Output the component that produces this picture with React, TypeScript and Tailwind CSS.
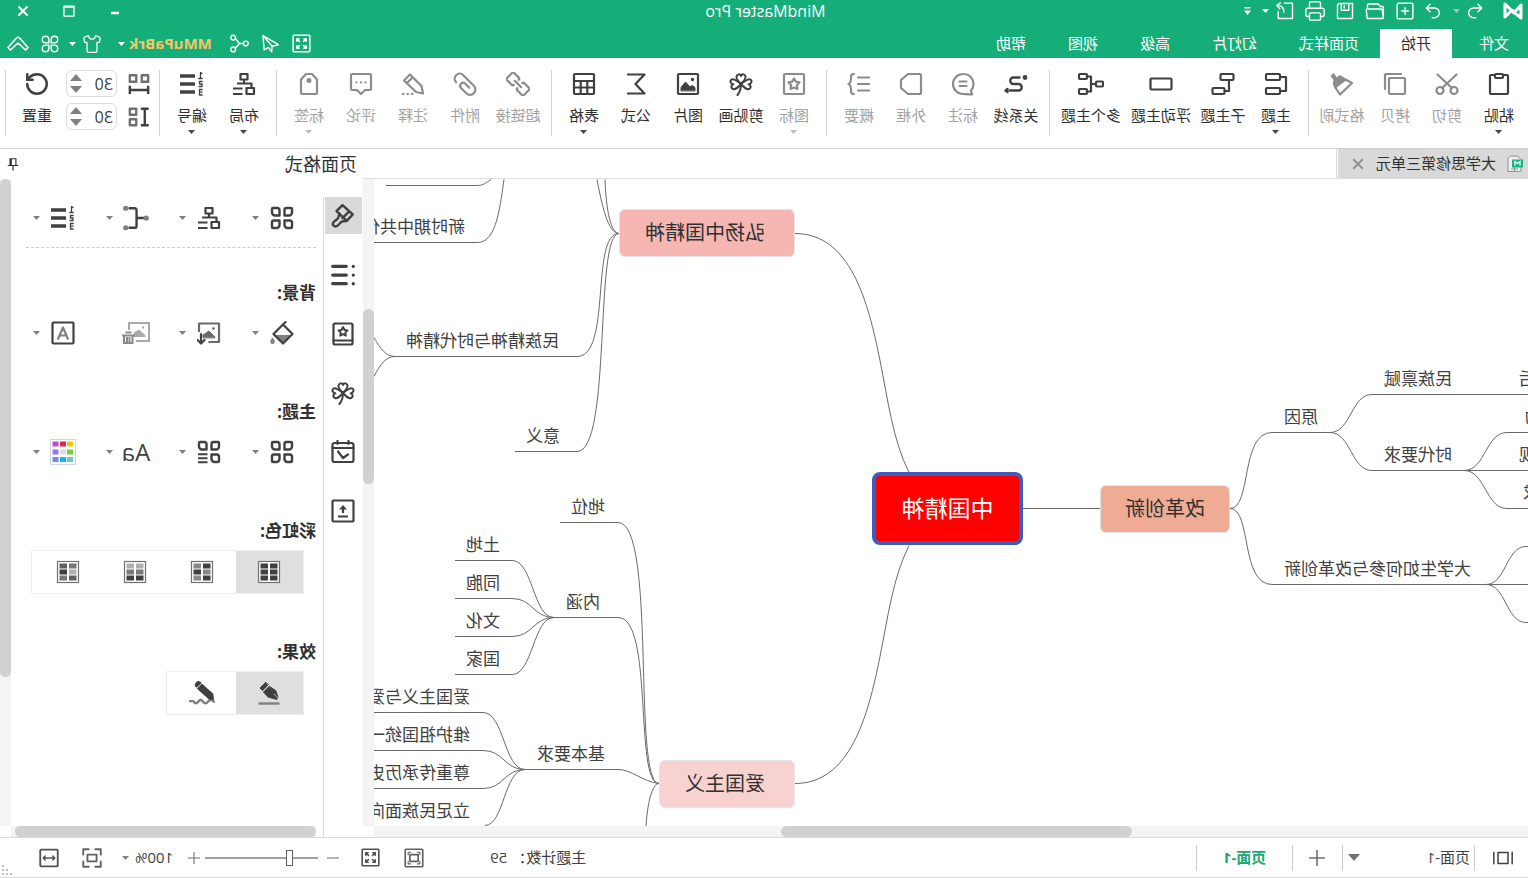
import React from "react";
import { Printer, RotateCw, Shirt } from "lucide-react";

type IconProps = { children: React.ReactNode; className?: string; sw?: number };

function Icon({ children, className = "size-6", sw = 2.2 }: IconProps) {
  return (
    <svg
      viewBox="0 0 24 24"
      className={`${className} shrink-0`}
      fill="none"
      stroke="currentColor"
      strokeWidth={sw}
      strokeLinecap="round"
      strokeLinejoin="round"
      aria-hidden="true"
    >
      {children}
    </svg>
  );
}

function Caret({ className = "text-[#45454f]" }: { className?: string }) {
  return (
    <svg viewBox="0 0 7 4" className={`h-1 w-[7px] shrink-0 ${className}`} aria-hidden="true">
      <path d="M0 0h7L3.5 4z" fill="currentColor" />
    </svg>
  );
}

/* ---------- icon drawings ---------- */

const paste = (
  <Icon>
    <path d="M8 3H4a1 1 0 0 0-1 1v17a1 1 0 0 0 1 1h16a1 1 0 0 0 1-1V4a1 1 0 0 0-1-1h-4" />
    <rect x="8" y="2" width="8" height="4" rx="1" />
  </Icon>
);
const cut = (
  <Icon>
    <circle cx="5" cy="18.5" r="3.5" />
    <circle cx="19" cy="18.5" r="3.5" />
    <path d="M2.5 2.5 16.8 16M21.5 2.5 7.2 16" />
  </Icon>
);
const copy = (
  <Icon>
    <rect x="2" y="6" width="16" height="16" rx="1" />
    <path d="M6 2h15a1 1 0 0 1 1 1v14" />
  </Icon>
);
const painter = (
  <Icon>
    <path d="M2 11 8.5 7.5 19 15 14 22.500z" />
    <path d="M8.500 7.500l5.500-3.500 3.500 2.500 3-4.500 2 2-3 4 1 3.500-1.500 4z" fill="currentColor" strokeWidth="1.600" />
  </Icon>
);
const topic = (
  <Icon>
    <rect x="8" y="2" width="14" height="6" rx="1" />
    <rect x="8" y="16" width="14" height="6" rx="1" />
    <path d="M8 5H2v14h6" />
  </Icon>
);
const subTopic = (
  <Icon>
    <rect x="1.5" y="2" width="13" height="6" rx="1" />
    <rect x="10.5" y="16" width="12" height="6" rx="1" />
    <path d="M6 9v10h4" />
  </Icon>
);
const floating = (
  <Icon>
    <rect x="1.5" y="6.5" width="21" height="11" rx="1" />
  </Icon>
);
const multi = (
  <Icon className="h-6 w-[26px]">
    <rect x="0" y="9.5" width="7" height="5" rx="1" />
    <rect x="16" y="2" width="8" height="5" rx="1" />
    <rect x="16" y="17" width="8" height="5" rx="1" />
    <path d="M16 4.500h-4v15h4M7 12h5" />
  </Icon>
);
const relation = (
  <Icon sw={2.4}>
    <circle cx="3" cy="5.5" r="1.2" fill="currentColor" />
    <path d="M8.500 5.500h6a3.200 3.200 0 0 1 0 6.500h-5a3.200 3.200 0 0 0 0 6.500H18" />
    <path d="M20.500 17 22.500 18.500 20.500 20z" fill="currentColor" />
  </Icon>
);
const callout = (
  <Icon>
    <path d="M12 2a10 10 0 0 1 0 20c-2 0-5 .5-9 .5l1-4A10 10 0 0 1 12 2z" />
    <path d="M8.500 9.500h7M8.500 14h7" />
  </Icon>
);
const boundary = (
  <Icon>
    <path d="M3.500 2H15l7 6v8l-7 6H3.500A1.500 1.500 0 0 1 2 20.500v-17A1.500 1.500 0 0 1 3.500 2z" />
  </Icon>
);
const summary = (
  <Icon>
    <path d="M2 5.500h11M2 12h11M2 18.500h11M17 2c3 0 3 1 3 4s0 5 2.500 6c-2.500 1-2.500 3-2.500 6s0 4-3 4" />
  </Icon>
);
const marks = (
  <Icon>
    <rect x="2" y="2" width="20" height="20" rx="1" />
    <path d="M12 6.500l1.800 3.200 3.700.7-2.600 2.700.5 3.900-3.400-1.500-3.400 1.500.5-3.900-2.600-2.700 3.700-.7z" />
  </Icon>
);
const clover = (
  <Icon sw={2}>
    <path d="M12 12C9 9 7 7 7.500 4.500 8 2 11 1.500 12 4c1-2.500 4-2 4.500.5C17 7 15 9 12 12z" />
    <path d="M12 12c-3 3.500-5.500 6-8 5-2.500-1-2-4 .3-4.700C1.800 12 .5 9 2.500 7.500 5 6 8 9 12 12z" />
    <path d="M12 12c3 3.500 5.500 6 8 5 2.500-1 2-4-.3-4.700C22.200 12 23.500 9 21.500 7.500 19 6 16 9 12 12z" />
    <path d="M12 12c0 4 1 8 3.500 11" />
  </Icon>
);
const picture = (
  <Icon>
    <rect x="2" y="2" width="20" height="20" rx="1" />
    <circle cx="7.500" cy="7.500" r="1" fill="currentColor" strokeWidth="1.500" />
    <path d="M5 18.500v-3l3-2 2 1.500 4.500-5 4.500 5.500v3z" fill="currentColor" strokeWidth="1" />
  </Icon>
);
const formula = (
  <Icon>
    <path d="M21 2.500H3.500l9 9.500-9 9.500H21" strokeLinecap="butt" />
  </Icon>
);
const tableIcon = (
  <Icon>
    <rect x="2" y="2" width="20" height="20" rx="1" />
    <path d="M2 9h20M2 15.500h20M8.700 9v13M15.300 9v13" />
  </Icon>
);
const linkIcon = (
  <Icon>
    <g transform="rotate(-45 12 12)">
      <path d="M9.500 15.500a1.500 1.500 0 0 1-1.500 1.500H1.500A1.500 1.500 0 0 1 0 15.500v-7A1.500 1.500 0 0 1 1.500 7H8a1.500 1.500 0 0 1 1.500 1.500" />
      <path d="M14.500 8.500A1.500 1.500 0 0 1 16 7h6.500A1.500 1.500 0 0 1 24 8.500v7a1.500 1.500 0 0 1-1.500 1.500H16a1.500 1.500 0 0 1-1.500-1.500" />
      <path d="M7.500 12h9" />
    </g>
  </Icon>
);
const clipIcon = (
  <Icon>
    <g transform="rotate(-45 12 12)">
      <path d="M19.500 17a5 5 0 0 0 0-10H4.500a5.300 5.300 0 0 0 0 10.600H12a3 3 0 0 0 0-6H6.500" />
    </g>
  </Icon>
);
const noteIcon = (
  <Icon>
    <path d="M2 21.500 3.500 14 15 2.500l6 6L9 20z M12.500 5.500l5.500 5.500" />
    <path d="M12.500 22h.6M17 22h.6M21.500 22h.6" />
  </Icon>
);
const comment = (
  <Icon>
    <path d="M3 2h18a1 1 0 0 1 1 1v14a1 1 0 0 1-1 1h-5l-4 4-4-4H3a1 1 0 0 1-1-1V3a1 1 0 0 1 1-1z" />
    <path d="M7.500 10.300v.1M12 10.300v.1M16.500 10.300v.1" />
  </Icon>
);
const tagIcon = (
  <Icon>
    <path d="M9 2h6l5 5.500V21a1 1 0 0 1-1 1H5a1 1 0 0 1-1-1V7.500z" />
    <circle cx="12" cy="8.500" r="1.400" fill="currentColor" />
  </Icon>
);
const layoutIcon = (
  <Icon>
    <rect x="8.500" y="2" width="7" height="5.500" />
    <rect x="2" y="16" width="7.500" height="6" />
    <path d="M12 8v3.500M4.500 15v-3.500H19M13.500 16.500h9.500M13.500 22h9.500" strokeLinecap="butt" />
  </Icon>
);
const numbering = (
  <Icon sw={1}>
    <path d="M9 4h15M9 12h15M9 20h15" strokeWidth="3.600" strokeLinecap="butt" />
    <path d="M2 1.500 3.500.5v6M1.800 6.500h3.400M1.800 9.500h2.700v2.500H2v2.500h3M1.800 17.500h2.700V23H1.800M2 20.200h2.500" strokeWidth="1.300" />
  </Icon>
);
const hSpace = (
  <Icon className="size-[22px]" sw={2.6}>
    <g opacity=".75">
      <rect x="2" y="2.500" width="7" height="7" />
      <rect x="15" y="2.500" width="7" height="7" />
    </g>
    <path d="M2 14v9M22 14v9M2 18.500h20" strokeLinecap="butt" />
  </Icon>
);
const vSpace = (
  <Icon className="size-[22px]" sw={2.6}>
    <g opacity=".75">
      <rect x="15" y="3" width="7" height="6.500" />
      <rect x="15" y="14.500" width="7" height="6.500" />
    </g>
    <path d="M1.500 3H10M1.500 21H10M5.700 3v18" strokeLinecap="butt" />
  </Icon>
);
const petals = (
  <Icon sw={2.4}>
    <path d="M3 2h4.500A2 2 0 0 1 9.500 4v5.500H5A3 3 0 0 1 2 6.500V3a1 1 0 0 1 1-1z" />
    <path d="M21 2h-4.500a2 2 0 0 0-2 2v5.500H19a3 3 0 0 0 3-3V3a1 1 0 0 0-1-1z" />
    <path d="M3 22h3.500a3 3 0 0 0 3-3v-4.500H4a2 2 0 0 0-2 2V21a1 1 0 0 0 1 1z" />
    <path d="M21 22h-3.500a3 3 0 0 1-3-3v-4.500H20a2 2 0 0 1 2 2V21a1 1 0 0 1-1 1z" />
  </Icon>
);
const petalsList = (
  <Icon sw={2.4}>
    <path d="M3 2h4.500A2 2 0 0 1 9.500 4v5.500H5A3 3 0 0 1 2 6.500V3a1 1 0 0 1 1-1z" />
    <path d="M21 2h-4.500a2 2 0 0 0-2 2v5.500H19a3 3 0 0 0 3-3V3a1 1 0 0 0-1-1z" />
    <path d="M3 22h3.500a3 3 0 0 0 3-3v-4.500H4a2 2 0 0 0-2 2V21a1 1 0 0 0 1 1z" />
    <path d="M13.500 14.300H23M13.500 18.300H23M13.500 22.300H23" strokeLinecap="butt" strokeWidth="2" />
  </Icon>
);
const connector = (
  <Icon className="size-[26px]">
    <path d="M4 12h7.500M18 3h-5a1.500 1.500 0 0 0-1.500 1.500v15A1.500 1.500 0 0 0 13 21h5" />
    <g fill="#808080" stroke="none">
      <circle cx="2.500" cy="12" r="2.400" />
      <circle cx="21.500" cy="3" r="2.400" />
      <circle cx="21.500" cy="21" r="2.400" />
    </g>
  </Icon>
);
const bucket = (
  <Icon>
    <path d="M3 14h16l-8 7.500z" fill="#808080" stroke="none" />
    <path d="M1.500 13 11 3.500l9.500 9.500-9.500 9.500z M11 3.500 8.500 1" />
    <path d="M21.500 16.500c1.500 2 2.300 3 2.300 4.300a2.300 2.300 0 0 1-4.600 0c0-1.300.8-2.300 2.300-4.300z" fill="#808080" stroke="none" />
  </Icon>
);
const imageDown = (
  <Icon>
    <g stroke="#6b6b6b">
      <path d="M12.500 21H2V2.500h20V11" strokeLinecap="butt" />
      <circle cx="7.500" cy="7.500" r=".6" fill="#6b6b6b" strokeWidth="1.500" />
      <path d="M6 16.500v-.5l6-6 6 4v2.500z" fill="#6b6b6b" strokeWidth="1" />
    </g>
    <path d="M20 13v9M16.500 19l3.500 3.500 3.500-3.500" />
  </Icon>
);
const imageTrash = (
  <svg viewBox="0 0 28 28" className="size-7 shrink-0" fill="none" strokeWidth="2" aria-hidden="true">
    <g stroke="#aaaaaa">
      <path d="M14 22H1V4h20v7" />
      <path d="M5 17.500v-1l6-5.500 5 3v3.500z" fill="#aaaaaa" strokeWidth="1" />
      <path d="M6 8.500h2" />
    </g>
    <g stroke="#8a8a8a">
      <path d="M15 16.500h13M18.500 13.500h6M17.500 16.500v7.500h8.500v-7.500M20.500 18v5M23 18v5" />
    </g>
  </svg>
);
const fontBox = (
  <Icon>
    <rect x="1.500" y="1.500" width="21" height="21" rx="1" />
    <path d="M6.800 18.500 12 6.500l5.200 12M8.500 14.500h7" stroke="#808080" strokeLinecap="butt" />
  </Icon>
);
const palette = (
  <svg viewBox="0 0 26 26" className="size-[26px] shrink-0" aria-hidden="true">
    <rect x=".5" y=".5" width="25" height="25" fill="#fff" stroke="#cdd6e6" />
    <path d="M3 2.500h6v5H3z" fill="#f0c808" />
    <path d="M10 2.500h6v5h-6z" fill="#dc2848" />
    <path d="M17.500 2.500h6v5h-6z" fill="#c04cc8" />
    <path d="M3 10.500h6v5H3z" fill="#70d040" />
    <path d="M10 10.500h6v5h-6z" fill="#dcdcdc" />
    <path d="M17.500 10.500h6v5h-6z" fill="#9078f0" />
    <path d="M3 18h6v5H3z" fill="#68c8d8" />
    <path d="M10 18h6v5h-6z" fill="#08b8f8" />
    <path d="M17.500 18h6v5h-6z" fill="#7088f8" />
  </svg>
);
const brushTab = (
  <Icon className="size-[26px]">
    <path d="M12.500 2 3 10.500l5.500 6L18 7.500z M6.500 8l6 6" />
    <path d="M8.500 16.500 11 17c1.500-.5 3 .5 4.500 2.500s3.500 2.500 5 1.500 1-3-1-4.500-4-2.500-3.500-4.500l-1-2" />
  </Icon>
);
const listTab = (
  <Icon className="size-[26px]">
    <path d="M9 4h12.500M9 12h12.500M9 20h12.500" strokeWidth="3" />
    <path d="M2.500 4v.1M2.500 12v.1M2.500 20v.1" strokeWidth="3" />
  </Icon>
);
const bookTab = (
  <Icon>
    <rect x="2.500" y="1.500" width="19" height="21" rx="1.500" />
    <path d="M2.500 18.500h19" />
    <path d="M12 5l1.500 3 3 .4-2.200 2.200.5 3.100-2.800-1.500-2.800 1.500.5-3.100-2.200-2.200 3-.4z" strokeWidth="1.900" />
  </Icon>
);
const calendarTab = (
  <Icon>
    <rect x="1.500" y="3" width="21" height="19" rx="2" />
    <path d="M1.500 8h21M6.500 1v3M17.500 1v3M7 14.500l5 3.500 5-6.500" />
  </Icon>
);
const uploadTab = (
  <Icon>
    <rect x="1.500" y="1.500" width="21" height="21" rx="1" />
    <path d="M7 17.500h10M12 14V9" strokeLinecap="butt" />
    <path d="M8 10.500 12 6l4 4.500z" fill="currentColor" stroke="none" />
  </Icon>
);
const expandIcon = (
  <Icon className="size-[19px]" sw={2}>
    <rect x="1.500" y="1.500" width="21" height="21" rx="1" />
    <path d="M9.500 9.500 6 6M6 9V6h3M14.500 9.500 18 6M15 6h3v3M9.500 14.500 6 18M6 15v3h3M14.500 14.500 18 18M18 15v3h-3" />
  </Icon>
);
const mmLogo = (
  <svg viewBox="0 0 20 18" className="h-[18px] w-5 shrink-0" aria-hidden="true">
    <path d="M2 16V3l7 8 2-2 7-7v13l-7-7-2 2z" fill="none" stroke="currentColor" strokeWidth="3" strokeLinejoin="round" />
  </svg>
);

/* ---------- title bar ---------- */

function IconButton({ label, children, className = "" }: { label: string; children: React.ReactNode; className?: string }) {
  return (
    <button type="button" aria-label={label} className={`flex shrink-0 items-center justify-center ${className}`}>
      {children}
    </button>
  );
}

function TitleBar() {
  const q = "w-[30px]";
  return (
    <div className="flex h-[22px] items-center text-white">
      <div className="flex flex-1 items-center pl-[5px]">
        {mmLogo}
        <IconButton label="撤销" className="ml-[15px] w-[26px]">
          <Icon className="size-[18px]" sw={1.9}>
            <path d="M8 3 3 8l5 5M3 8h11a6.500 6.500 0 0 1 0 13h-3" />
          </Icon>
        </IconButton>
        <IconButton label="撤销列表" className="w-[10px]">
          <Caret className="text-[#a5c9b9]" />
        </IconButton>
        <IconButton label="重做" className="ml-[6px] w-[26px]">
          <Icon className="size-[18px]" sw={1.9}>
            <path d="M16 3l5 5-5 5M21 8H10a6.500 6.500 0 0 0 0 13h3" />
          </Icon>
        </IconButton>
        <IconButton label="新建" className={q}>
          <Icon className="size-[18px]" sw={1.9}>
            <rect x="1.500" y="1.500" width="21" height="21" rx="2" />
            <path d="M12 7.500v9M7.500 12h9" />
          </Icon>
        </IconButton>
        <IconButton label="打开" className={q}>
          <Icon className="size-5" sw={1.7}>
            <path d="M2 20V7.500a1 1 0 0 1 1-1h3l2-3h12a1 1 0 0 1 1 1V8M2 20l1.500-9.500a1 1 0 0 1 1-1h17a1 1 0 0 1 1 1l-1 9.500a1 1 0 0 1-1 1H3a1 1 0 0 1-1-1z" />
          </Icon>
        </IconButton>
        <IconButton label="保存" className={q}>
          <Icon className="size-[18px]" sw={1.9}>
            <path d="M2 2h18l2 2v18H3a1 1 0 0 1-1-1zM7 2v9h10V2M13 5v3" />
          </Icon>
        </IconButton>
        <IconButton label="打印" className={q}>
          <Printer className="size-[22px]" strokeWidth={1.5} />
        </IconButton>
        <IconButton label="导出" className={q}>
          <Icon className="size-[18px]" sw={1.9}>
            <path d="M13 1.500H3a1 1 0 0 0-1 1V22h19V13" />
            <path d="M22.500 4.500c-6-.5-9 3-9 9M18 1l5 3.500-4 4.500" />
          </Icon>
        </IconButton>
        <IconButton label="导出列表" className="w-2">
          <Caret className="text-white" />
        </IconButton>
        <IconButton label="自定义快速访问" className="w-7">
          <svg viewBox="0 0 7 8" className="h-2 w-[7px]" aria-hidden="true">
            <path d="M.5 0h6v1.500h-6zM0 3.500h7L3.500 8z" fill="currentColor" />
          </svg>
        </IconButton>
      </div>
      <h1 className="pr-2 text-[16px] leading-5">MindMaster Pro</h1>
      <div className="flex flex-1 items-center justify-end">
        <IconButton label="最小化" className="w-[46px]">
          <Icon className="size-3" sw={5}><path d="M4 16h16" strokeLinecap="butt" /></Icon>
        </IconButton>
        <IconButton label="最大化" className="w-[46px]">
          <Icon className="size-3" sw={2.5}><path d="M2 2h20v20H2z" /><path d="M2 4h20" /></Icon>
        </IconButton>
        <IconButton label="关闭" className="w-[46px]">
          <Icon className="size-3" sw={4}><path d="M4 4l16 16M20 4 4 20" /></Icon>
        </IconButton>
      </div>
    </div>
  );
}

const tabs = ["页面样式", "幻灯片", "高级", "视图", "帮助"];

function TabBar() {
  return (
    <div className="mt-[7px] flex h-[29px] text-[15px] text-white">
      <nav className="flex">
        <button type="button" className="pr-[27px] pl-[19px]">文件</button>
        <button type="button" className="bg-white px-[21px] text-[#303030]">开始</button>
        {tabs.map((t) => (
          <button key={t} type="button" className="px-[21px]">{t}</button>
        ))}
      </nav>
      <div className="ml-auto flex items-center pr-[7px]">
        <IconButton label="全屏" className="w-[31px]">{expandIcon}</IconButton>
        <IconButton label="发送" className="w-[31px]">
          <Icon className="size-[19px]" sw={1.8}>
            <path d="M21.500 2 2 13.500l8 2 .5 7 4-5.500 5.500 3zM10 15.500 21.500 2" />
          </Icon>
        </IconButton>
        <IconButton label="分享" className="w-[31px]">
          <Icon className="size-[19px]" sw={1.8}>
            <circle cx="20" cy="4.500" r="3" />
            <circle cx="4" cy="12" r="3" />
            <circle cx="20" cy="19.500" r="3" />
            <path d="M7 12h5l5-6M12 12l5.500 6" />
          </Icon>
        </IconButton>
        <button type="button" className="ml-3 flex items-center gap-1 font-bold text-[#f6c667]">
          MMuPaBrk
          <Caret className="text-white" />
        </button>
        <button type="button" aria-label="皮肤" className="ml-4 flex items-center gap-[6px]">
          <Shirt className="size-5" strokeWidth={1.5} />
          <Caret className="text-white" />
        </button>
        <IconButton label="应用" className="ml-[10px] w-[18px]">
          <Icon className="size-[18px]" sw={1.9}>
            <path d="M10.500 10.500H6A4.400 4.400 0 1 1 10.500 6zM13.500 10.500H18A4.400 4.400 0 1 0 13.500 6zM10.500 13.500H6a4.400 4.400 0 1 0 4.500 4.500zM13.500 13.500H18a4.400 4.400 0 1 1-4.500 4.500z" />
          </Icon>
        </IconButton>
        <IconButton label="折叠功能区" className="ml-3 w-[22px]">
          <svg viewBox="0 0 22 15" className="h-[15px] w-[22px]" fill="none" stroke="currentColor" strokeWidth="1.600" strokeLinejoin="round" aria-hidden="true">
            <path d="M1 11.500 9.500 2q1.500-1.500 3 0L21 11.500 18.500 14 11 7 3.500 14z" />
          </svg>
        </IconButton>
      </div>
    </div>
  );
}

/* ---------- ribbon ---------- */

type Tool = { label: string; icon: React.ReactNode; off?: boolean; caret?: boolean };

const groups: Tool[][] = [
  [
    { label: "粘贴", icon: paste, caret: true },
    { label: "剪切", icon: cut, off: true },
    { label: "拷贝", icon: copy, off: true },
    { label: "格式刷", icon: painter, off: true },
  ],
  [
    { label: "主题", icon: topic, caret: true },
    { label: "子主题", icon: subTopic },
    { label: "浮动主题", icon: floating },
    { label: "多个主题", icon: multi },
  ],
  [
    { label: "关系线", icon: relation },
    { label: "标注", icon: callout, off: true },
    { label: "外框", icon: boundary, off: true },
    { label: "概要", icon: summary, off: true },
  ],
  [
    { label: "图标", icon: marks, off: true, caret: true },
    { label: "剪贴画", icon: clover },
    { label: "图片", icon: picture },
    { label: "公式", icon: formula },
    { label: "表格", icon: tableIcon, caret: true },
  ],
  [
    { label: "超链接", icon: linkIcon, off: true },
    { label: "附件", icon: clipIcon, off: true },
    { label: "注释", icon: noteIcon, off: true },
    { label: "评论", icon: comment, off: true },
    { label: "标签", icon: tagIcon, off: true, caret: true },
  ],
  [
    { label: "布局", icon: layoutIcon, caret: true },
    { label: "编号", icon: numbering, caret: true },
  ],
];

const toolWidth: Record<number, string> = { 2: "w-[52px]", 3: "w-[54px]", 4: "w-[70px]" };

function ToolButton({ tool }: { tool: Tool }) {
  return (
    <button
      type="button"
      disabled={tool.off}
      className={`flex shrink-0 flex-col items-center pt-[14px] ${toolWidth[tool.label.length]} ${tool.off ? "text-[#8c8c8c]" : "text-[#404040]"}`}
    >
      {tool.icon}
      <span className={`mt-[9px] text-[15px] leading-5 whitespace-nowrap ${tool.off ? "text-[#a2a2a2]" : "text-[#303030]"}`}>
        {tool.label}
      </span>
      {tool.caret && (
        <span className="mt-[5px]">
          <Caret className={tool.off ? "text-[#bbbbbb]" : "text-[#45454f]"} />
        </span>
      )}
    </button>
  );
}

const Divider = () => <div className="mt-3 h-[66px] w-px shrink-0 bg-[#d2d2d2]" />;

function Spacing({ id, label, icon }: { id: string; label: string; icon: React.ReactNode }) {
  return (
    <div className="flex items-center gap-[11px]">
      <label htmlFor={id} aria-label={label} className="text-[#404040]">{icon}</label>
      <div className="flex h-[27px] w-[51px] items-center rounded-md border border-[#dcdcdc] pr-[3px] pl-[3px]">
        <input id={id} defaultValue="30" className="w-full min-w-0 bg-transparent text-[16px] leading-5 text-[#404040] outline-none" />
        <div className="flex flex-col gap-[5px] text-[#808080]">
          <button type="button" aria-label={`增加${label}`}>
            <svg viewBox="0 0 12 7" className="block h-[7px] w-3" aria-hidden="true"><path d="M0 7h12L6 0z" fill="currentColor" /></svg>
          </button>
          <button type="button" aria-label={`减少${label}`}>
            <svg viewBox="0 0 12 7" className="block h-[7px] w-3" aria-hidden="true"><path d="M0 0h12L6 7z" fill="currentColor" /></svg>
          </button>
        </div>
      </div>
    </div>
  );
}

function Ribbon() {
  return (
    <div className="flex h-[91px] shrink-0 overflow-hidden border-b border-[#d0d0d0] bg-white pl-[3px]">
      {groups.map((g, i) => (
        <React.Fragment key={i}>
          <div className={`flex pr-[6px] ${i === 0 ? "" : "pl-[6px]"}`}>
            {g.map((t) => (
              <ToolButton key={t.label} tool={t} />
            ))}
          </div>
          <Divider />
        </React.Fragment>
      ))}
      <div className="flex flex-col gap-[6px] pt-3 pl-[9px]">
        <Spacing id="space-h" label="水平间距" icon={hSpace} />
        <Spacing id="space-v" label="垂直间距" icon={vSpace} />
      </div>
      <button type="button" className="mr-[2px] flex w-[58px] shrink-0 flex-col items-center pt-[13px] text-[#404040]">
        <RotateCw className="size-[26px]" strokeWidth={2.3} />
        <span className="mt-2 text-[15px] leading-5 text-[#303030]">重置</span>
      </button>
      <Divider />
    </div>
  );
}

/* ---------- mind map ---------- */

type Topic = { text: string; x: number; line: number };

const leaves: Topic[] = [
  { text: "民族禀赋", x: 76, line: 215 },
  { text: "原因", x: 210, line: 253 },
  { text: "时代要求", x: 76, line: 291 },
  { text: "大学生如何参与改革创新", x: 57, line: 405 },
  { text: "后", x: -8, line: 215 },
  { text: "动", x: -14, line: 253 },
  { text: "观", x: -8, line: 291 },
  { text: "求", x: -12, line: 329 },
  { text: "新时期中共代", x: 1063, line: 63 },
  { text: "民族精神与时代精神", x: 969, line: 177 },
  { text: "意义", x: 968, line: 272 },
  { text: "地位", x: 923, line: 343 },
  { text: "内涵", x: 928, line: 438 },
  { text: "土地", x: 1028, line: 381 },
  { text: "同胞", x: 1028, line: 419 },
  { text: "文化", x: 1028, line: 457 },
  { text: "国家", x: 1028, line: 495 },
  { text: "基本要求", x: 923, line: 590 },
  { text: "爱国主义与爱", x: 1058, line: 533 },
  { text: "维护祖国统一", x: 1058, line: 571 },
  { text: "尊重传承历史", x: 1058, line: 609 },
  { text: "立足民族面向", x: 1058, line: 647 },
];

/* S-shaped branch from a parent's end to the start of a child's line, then along it */
function branch(x1: number, y1: number, x2: number, y2: number, end: number) {
  const mid = (x1 + x2) / 2;
  return `M${x1} ${y1}C${mid} ${y1} ${mid} ${y2} ${x2} ${y2}H${end}`;
}

const links = [
  "M505 329H428",
  "M619 293C635 261 640 221 648 181C660 121 678 54 733 54",
  "M619 366C635 398 640 437 648 477C660 537 678 604 733 604",
  "M298 329C276 329 288 253 256 253H198",
  "M298 329C276 329 288 405 256 405H42",
  branch(198, 253, 156, 215, 0),
  branch(198, 253, 156, 291, 64),
  branch(64, 291, 21, 253, 0),
  "M64 291H0",
  branch(64, 291, 21, 329, 0),
  branch(42, 405, 2, 367, 0),
  "M42 405H0",
  branch(42, 405, 2, 443, 0),
  "M909 54C938 54 916 177 951 177H1133",
  "M909 54C934 54 916 272 951 272H1013",
  "M909 54C920 54 926 26 931 0",
  "M909 54C917 54 922 31 923 0",
  "M1037 0C1042 3 1044 6 1051 6H1142",
  "M1024 0C1029 36 1033 63 1051 63H1154",
  "M1133 177C1142 177 1148 169 1154 158",
  "M1133 177C1142 177 1148 185 1154 197",
  "M869 604C896 604 871 343 910 343H968",
  "M869 604C894 604 874 438 910 438H974",
  "M869 604C886 602 896 590 910 590H1003",
  "M869 604C876 604 881 625 882 648",
  branch(974, 438, 1016, 381, 1073),
  branch(974, 438, 1016, 419, 1073),
  branch(974, 438, 1016, 457, 1073),
  branch(974, 438, 1016, 495, 1073),
  branch(1003, 590, 1045, 533, 1154),
  branch(1003, 590, 1045, 571, 1154),
  branch(1003, 590, 1045, 609, 1154),
  "M1003 590C1024 590 1024 646 1043 646",
];

function MindMap() {
  return (
    <div className="relative min-w-0 flex-1 overflow-hidden bg-white">
      <svg width="1154" height="647" className="absolute top-0 left-0" fill="none" stroke="#6a6a6a" strokeWidth="1" aria-hidden="true">
        <g transform="translate(0 .5)">
          {links.map((d) => (
            <path key={d} d={d} />
          ))}
        </g>
      </svg>
      {leaves.map((n) => (
        <span
          key={n.text + n.line}
          className="absolute text-[17px] leading-6 whitespace-nowrap text-[#404040]"
          style={{ left: n.x, top: n.line - 27 }}
        >
          {n.text}
        </span>
      ))}
      <div className="absolute top-[293px] left-[505px] flex h-[73px] w-[151px] items-center justify-center rounded-lg border-4 border-[#405cba] bg-[#ff0000] text-[23px] text-white">
        中国精神
      </div>
      <div className="absolute top-[306px] left-[298px] flex h-12 w-[130px] items-center justify-center rounded-md border border-[#e4e4ec] bg-[#f0ab94] text-[20px] text-[#303030]">
        改革创新
      </div>
      <div className="absolute top-[30px] left-[733px] flex h-12 w-[176px] items-center rounded-md border border-[#e4e4ec] bg-[#f6b7b3] pl-[29px] text-[20px] text-[#303030]">
        弘扬中国精神
      </div>
      <div className="absolute top-[581px] left-[733px] flex h-12 w-[136px] items-center rounded-md border border-[#e4e4ec] bg-[#f8d2d1] pl-[29px] text-[20px] text-[#303030]">
        爱国主义
      </div>
    </div>
  );
}

function Workspace() {
  return (
    <main className="flex min-w-0 flex-1 flex-col">
      <div className="flex h-[30px] shrink-0 border-b border-[#dedede]">
        <div className="flex w-[190px] items-center bg-[#d9d9d9] pl-[5px]">
          <svg viewBox="0 0 16 18" className="h-[18px] w-4 shrink-0" aria-hidden="true">
            <path d="M5.500 1H12.500l2.500 2.500V16.500H2V4.500z" fill="#ececec" stroke="#909090" />
            <path d="M5 14h7M8.500 12v4.500" stroke="#909090" />
            <path d="M0 4.500h11v8H0z" fill="#12b886" />
            <path d="M3 10.500v-4l2.500 2 2.500-2v4" stroke="#fff" fill="none" strokeWidth="1.300" />
          </svg>
          <span className="ml-[11px] text-[15px] whitespace-nowrap text-[#303030]">大学思修第三单元</span>
          <IconButton label="关闭文档" className="ml-3">
            <Icon className="size-3 text-[#909090]" sw={3.6}><path d="M2.500 2.500l19 19M21.500 2.500l-19 19" strokeLinecap="butt" /></Icon>
          </IconButton>
        </div>
        <div className="ml-px w-px bg-[#d9d9d9]" />
      </div>
      <div className="flex min-h-0 flex-1">
        <MindMap />
        <div className="w-[11px] shrink-0 bg-[#f4f4f4] pt-[130px]">
          <div className="h-[175px] rounded-full bg-[#d1d1d1]" />
        </div>
      </div>
      <div className="mr-[11px] h-[11px] shrink-0 bg-[#f4f4f4] pl-[396px]">
        <div className="h-full w-[351px] rounded-full bg-[#d1d1d1]" />
      </div>
    </main>
  );
}

/* ---------- format panel ---------- */

const sideTabs = [
  { label: "页面格式", icon: brushTab },
  { label: "大纲", icon: listTab },
  { label: "图标库", icon: bookTab },
  { label: "剪贴画库", icon: clover },
  { label: "任务", icon: calendarTab },
  { label: "上传", icon: uploadTab },
];

type Option = { label: string; icon: React.ReactNode; caret?: boolean };

function OptionRow({ items }: { items: Option[] }) {
  return (
    <div className="flex h-7">
      {items.map((o) => (
        <button key={o.label} type="button" aria-label={o.label} className="flex w-[73px] items-center pl-5 text-[#404040]">
          <span className="flex w-7 justify-center">{o.icon}</span>
          {o.caret !== false && <Caret className="ml-[9px] text-[#808080]" />}
        </button>
      ))}
    </div>
  );
}

function RainbowIcon({ cells }: { cells: string[] }) {
  return (
    <svg viewBox="0 0 24 24" className="size-6" aria-hidden="true">
      <rect x="1.500" y="1.500" width="21" height="21" fill="#fff" stroke="#707070" strokeWidth="1.200" />
      {cells.map((c, i) => (
        <rect key={i} x={i % 2 === 0 ? 3.5 : 13} y={3.5 + Math.floor(i / 2) * 6} width="7.500" height="5" fill={c} />
      ))}
    </svg>
  );
}

const rainbows = [
  ["#404040", "#404040", "#404040", "#404040", "#404040", "#404040"],
  ["#404040", "#888888", "#888888", "#404040", "#404040", "#888888"],
  ["#b0b0b0", "#b0b0b0", "#787878", "#787878", "#404040", "#404040"],
  ["#787878", "#606060", "#b0b0b0", "#404040", "#606060", "#787878"],
];

function SectionTitle({ children, className }: { children: React.ReactNode; className: string }) {
  return <h2 className={`text-[17px] leading-6 font-bold text-[#303030] ${className}`}>{children}</h2>;
}

function FormatPanel() {
  return (
    <aside className="flex w-[363px] shrink-0 flex-col bg-white">
      <header className="flex h-[30px] shrink-0 items-center justify-between pr-[6px] pl-[6px]">
        <span className="text-[18px] leading-6 text-[#303030]">页面格式</span>
        <IconButton label="固定面板">
          <Icon className="size-[14px] text-[#303030]" sw={2}><path d="M6 3h12M7 3v11M17 3v11M15 3v11M3 14.500h18M12 15v8" strokeLinecap="butt" /></Icon>
        </IconButton>
      </header>
      <div className="flex min-h-0 flex-1">
        <div className="mt-[18px] flex w-10 shrink-0 flex-col gap-[22px] border-r border-[#d9d9d9] text-[#404040]">
          {sideTabs.map((t, i) => (
            <IconButton key={t.label} label={t.label} className={`ml-px h-[37px] w-[37px] ${i === 0 ? "bg-[#d9d9d9]" : ""}`}>
              {t.icon}
            </IconButton>
          ))}
        </div>
        <div className="flex min-w-0 flex-1 flex-col pl-[7px]">
          <div className="min-h-0 flex-1 overflow-hidden pt-[25px]">
            <OptionRow
              items={[
                { label: "布局样式", icon: petals },
                { label: "布局方向", icon: layoutIcon },
                { label: "连接线样式", icon: connector },
                { label: "编号样式", icon: numbering },
              ]}
            />
            <div className="mt-[15px] mr-[15px] border-t border-dashed border-[#cccccc]" />
            <SectionTitle className="mt-[33px]">背景:</SectionTitle>
            <div className="mt-[14px]">
              <OptionRow
                items={[
                  { label: "背景颜色", icon: bucket },
                  { label: "插入背景图", icon: imageDown },
                  { label: "移除背景图", icon: imageTrash, caret: false },
                  { label: "水印", icon: fontBox },
                ]}
              />
            </div>
            <SectionTitle className="mt-[53px]">主题:</SectionTitle>
            <div className="mt-[14px]">
              <OptionRow
                items={[
                  { label: "主题样式", icon: petals },
                  { label: "主题布局", icon: petalsList },
                  { label: "主题字体", icon: <span className="text-[24px] leading-7 font-medium">Aa</span> },
                  { label: "主题颜色", icon: palette },
                ]}
              />
            </div>
            <SectionTitle className="mt-[53px]">彩虹色:</SectionTitle>
            <div className="mt-[7px] ml-3 flex h-11 w-[273px] border border-[#eeeeee]">
              {rainbows.map((cells, i) => (
                <IconButton key={i} label={`彩虹色 ${i + 1}`} className={`w-[67px] ${i === 0 ? "bg-[#dfdfdf]" : ""}`}>
                  <RainbowIcon cells={cells} />
                </IconButton>
              ))}
            </div>
            <SectionTitle className="mt-[46px]">效果:</SectionTitle>
            <div className="mt-[7px] ml-3 flex h-11 w-[138px] border border-[#eeeeee]">
              <IconButton label="直线效果" className="w-[67px] bg-[#dfdfdf] text-[#404040]">
                <Icon className="size-6" sw={1}>
                  <path d="M1.500 22.500h21" stroke="#808080" strokeWidth="2.400" strokeLinecap="butt" />
                  <path d="M15.500 1.500 21 7l-2.500 2.500-5.500-5.500zM12 5.500l5.500 5.500-4.500 5-9 2.500-.5-.5L7.500 13.500l-.8-1L3 16.500 5 10z" fill="currentColor" />
                </Icon>
              </IconButton>
              <IconButton label="手绘效果" className="w-[67px] text-[#404040]">
                <Icon className="size-[26px]" sw={1}>
                  <path d="M1 20c2-2 4-2 5.500 0s3 2 4.500 0 3-2 4.500 0 3 2 4.500-.5h4" stroke="#808080" strokeWidth="2.200" />
                  <path d="M14 2c2-1.500 5 1.500 4 3.500l-1 1L13 2.800zM12 4l4 4L5.500 17.500 1.500 18l.5-5z" fill="currentColor" />
                </Icon>
              </IconButton>
            </div>
          </div>
          <div className="h-[11px] shrink-0 bg-[#f4f4f4] pr-1">
            <div className="h-full rounded-full bg-[#d1d1d1]" />
          </div>
        </div>
        <div className="mb-[11px] w-[11px] shrink-0 bg-[#f4f4f4]">
          <div className="h-[498px] rounded-full bg-[#d1d1d1]" />
        </div>
      </div>
    </aside>
  );
}

/* ---------- status bar ---------- */

const Bar = () => <div className="h-[26px] w-px shrink-0 bg-[#cccccc]" />;

function StatusBar() {
  return (
    <footer className="flex h-[41px] shrink-0 items-center border-y border-[#dadada] bg-white text-[15px] text-[#404040]">
      <IconButton label="页面列表" className="mr-[3px] w-[50px]">
        <Icon className="size-5" sw={1.8}><path d="M6 5.500h12v13H6zM1 5v14M23 5v14" /></Icon>
      </IconButton>
      <Bar />
      <button type="button" className="flex w-[131px] items-center justify-between pr-[5px] pl-1">
        页面-1
        <svg viewBox="0 0 12 7" className="h-[7px] w-3" aria-hidden="true"><path d="M0 0h12L6 7z" fill="#707070" /></svg>
      </button>
      <Bar />
      <IconButton label="新建页面" className="w-[49px]">
        <Icon className="size-4 text-[#707070]" sw={2.4}><path d="M12 0v24M0 12h24" /></Icon>
      </IconButton>
      <Bar />
      <button type="button" className="w-[95px] font-bold text-[#1ba672]">页面-1</button>
      <Bar />
      <div className="ml-auto flex items-center">
        <span>主题计数： 59</span>
        <IconButton label="适应页面" className="ml-[66px]">
          <Icon className="size-5 text-[#606060]" sw={2}>
            <rect x="1.500" y="1.500" width="21" height="21" rx="1" />
            <rect x="7" y="8" width="10" height="8" />
            <path d="M5 8V5h3M16 5h3v3M5 16v3h3M16 19h3v-3" strokeWidth="1.300" />
          </Icon>
        </IconButton>
        <IconButton label="全屏显示" className="ml-6 text-[#505050]">{expandIcon}</IconButton>
        <IconButton label="缩小" className="ml-[22px]">
          <Icon className="size-3 text-[#707070]"><path d="M0 12h24" /></Icon>
        </IconButton>
        <input
          type="range"
          aria-label="缩放"
          defaultValue={24}
          className="mx-[9px] h-4 w-[113px] appearance-none bg-[linear-gradient(#a0a0a0,#a0a0a0)] bg-[length:100%_2px] bg-center bg-no-repeat [&::-webkit-slider-thumb]:h-4 [&::-webkit-slider-thumb]:w-[7px] [&::-webkit-slider-thumb]:appearance-none [&::-webkit-slider-thumb]:border [&::-webkit-slider-thumb]:border-[#606060] [&::-webkit-slider-thumb]:bg-white"
        />
        <IconButton label="放大" className="-ml-1">
          <Icon className="size-3 text-[#707070]"><path d="M12 0v24M0 12h24" /></Icon>
        </IconButton>
        <button type="button" className="ml-[15px] flex items-center gap-[6px]">
          100%
          <Caret className="text-[#808080]" />
        </button>
        <IconButton label="适应窗口" className="ml-5">
          <Icon className="size-5 text-[#606060]" sw={2.2}>
            <rect x="6.500" y="8" width="11" height="8" />
            <path d="M1.500 8V1.500H8M16 1.500h6.500V8M1.500 16v6.500H8M16 22.500h6.500V16" />
          </Icon>
        </IconButton>
        <IconButton label="适应宽度" className="ml-[23px]">
          <Icon className="size-5 text-[#505050]" sw={2.2}>
            <rect x="1.500" y="2" width="21" height="20" rx="1" />
            <path d="M5 12h14M7.500 9.500 5 12l2.500 2.500M16.500 9.500 19 12l-2.500 2.500" strokeWidth="1.700" />
          </Icon>
        </IconButton>
        <svg viewBox="0 0 10 10" className="mt-[25px] mr-[2px] ml-[27px] size-[10px]" fill="#c0c0c0" aria-hidden="true">
          <path d="M8 0h2v2H8zM8 4h2v2H8zM4 4h2v2H4zM8 8h2v2H8zM4 8h2v2H4zM0 8h2v2H0z" />
        </svg>
      </div>
    </footer>
  );
}

export default function App() {
  return (
    <div className="flex h-screen -scale-x-100 flex-col overflow-hidden bg-white font-['Open_Sans','Noto_Sans_CJK_SC',sans-serif]">
      <div className="shrink-0 bg-[#16ae78]">
        <TitleBar />
        <TabBar />
      </div>
      <Ribbon />
      <div className="flex min-h-0 flex-1">
        <Workspace />
        <FormatPanel />
      </div>
      <StatusBar />
    </div>
  );
}
